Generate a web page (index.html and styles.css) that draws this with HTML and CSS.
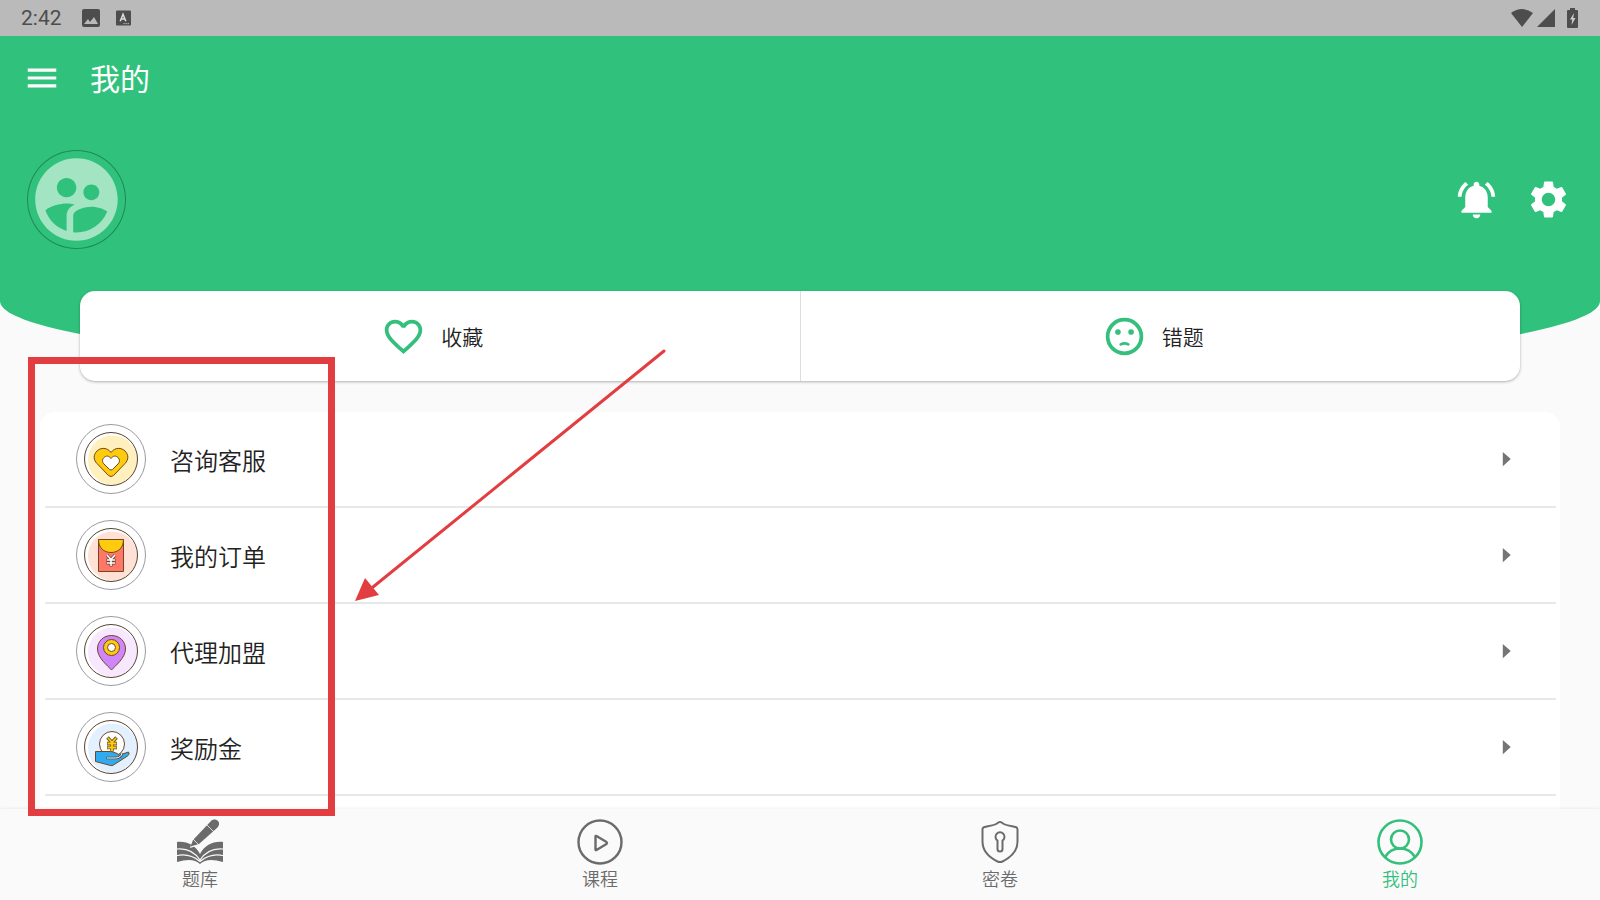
FILE: index.html
```html
<!DOCTYPE html>
<html lang="zh-CN">
<head>
<meta charset="utf-8">
<meta name="viewport" content="width=device-width, initial-scale=1">
<title>我的</title>
<link rel="stylesheet" href="styles.css">
</head>
<body>
<div class="status">
  <span class="time">2:42</span>
  <svg class="status-picture" width="18" height="18" viewBox="0 0 18 18"><rect width="18" height="18" rx="2" fill="#4d4d4d"/><path d="M2 15l4-5 2 3 4-5 4 7z" fill="#bababa"/></svg>
  <svg width="15" height="16" viewBox="0 0 16 16"><rect width="16" height="16" rx="1" fill="#4d4d4d"/><path d="M4.500 11.500L7.500 4l3 7.500M5.500 9h4" fill="none" stroke="#ddd" stroke-width="1.600"/><path d="M8 14h6" stroke="#ddd" stroke-dasharray="1.200 1"/></svg>
  <span class="spacer"></span>
  <svg width="22" height="18" viewBox="0 0 22 18"><path d="M0 4Q11-4 22 4L11 18z" fill="#4d4d4d"/></svg>
  <svg class="status-signal" width="18" height="18" viewBox="0 0 18 18"><path d="M18 0v18H0z" fill="#4d4d4d"/></svg>
  <svg class="status-battery" width="11" height="20" viewBox="0 0 11 20"><path d="M3 0h5v2h2q1 0 1 1v16q0 1-1 1H1q-1 0-1-1V3q0-1 1-1h2z" fill="#4d4d4d"/><path d="M7 5L3 11.500h2.200L4.500 17 8.500 10H6.200z" fill="#ccc"/></svg>
</div>
<header class="hero">
  <div class="appbar">
    <button class="icon-button" aria-label="菜单"><svg width="38" height="38" viewBox="0 0 24 24"><path fill="currentColor" d="M3 18h18v-2H3v2zm0-5h18v-2H3v2zm0-7v2h18V6H3z"/></svg></button>
    <h1>我的</h1>
  </div>
  <div class="profile">
    <button class="avatar" aria-label="头像"><svg width="99" height="99" viewBox="0 0 24 24"><path fill="#a3e4c2" d="M11.990 2c-5.520 0-10 4.480-10 10s4.480 10 10 10 10-4.480 10-10-4.480-10-10-10zm3.610 6.340c1.070 0 1.930.86 1.930 1.930 0 1.070-.86 1.930-1.930 1.930-1.070 0-1.930-.86-1.930-1.930-.01-1.070.86-1.930 1.930-1.930zm-6-1.580c1.300 0 2.360 1.060 2.360 2.360 0 1.300-1.060 2.360-2.360 2.360s-2.360-1.060-2.360-2.360c0-1.310 1.050-2.360 2.360-2.360zm0 9.130v3.750c-2.400-.75-4.300-2.600-5.140-4.960 1.050-1.120 3.670-1.690 5.140-1.690.53 0 1.200.08 1.900.22-1.640.87-1.900 2.020-1.900 2.680zM11.990 20c-.27 0-.53-.01-.79-.04v-4.070c0-1.420 2.940-2.130 4.400-2.130 1.070 0 2.920.39 3.840 1.150-1.170 2.970-4.060 5.090-7.450 5.090z"/></svg></button>
    <span class="spacer"></span>
    <button class="icon-button" aria-label="通知"><svg width="45" height="45" viewBox="0 0 24 24"><path fill="currentColor" d="M7.580 4.080L6.150 2.650C3.750 4.480 2.170 7.300 2.030 10.500h2c.15-2.650 1.510-4.970 3.550-6.420zm12.390 6.420h2c-.15-3.200-1.730-6.020-4.120-7.850l-1.420 1.430c2.020 1.450 3.390 3.770 3.540 6.420zM18 11c0-3.070-1.640-5.640-4.500-6.320V4c0-.83-.67-1.500-1.500-1.500s-1.500.67-1.500 1.500v.68C7.630 5.360 6 7.920 6 11v5l-2 2v1h16v-1l-2-2v-5zm-6 11c.14 0 .27-.01.4-.04.65-.14 1.180-.58 1.440-1.180.1-.24.15-.5.15-.78h-4c.01 1.100.9 2 2.010 2z"/></svg></button>
    <button class="icon-button" aria-label="设置"><svg width="45" height="45" viewBox="0 0 24 24"><path fill="currentColor" d="M19.140 12.940c.04-.3.06-.61.06-.94 0-.32-.02-.64-.07-.94l2.030-1.580c.18-.14.23-.41.12-.61l-1.920-3.320c-.12-.22-.37-.29-.59-.22l-2.390.96c-.5-.38-1.030-.7-1.620-.94l-.36-2.540c-.04-.24-.24-.41-.48-.41h-3.840c-.24 0-.43.17-.47.41l-.36 2.540c-.59.24-1.130.57-1.620.94l-2.390-.96c-.22-.08-.47 0-.59.22L2.740 8.870c-.12.21-.08.47.12.61l2.030 1.580c-.05.3-.09.63-.09.94s.02.64.07.94l-2.030 1.580c-.18.14-.23.41-.12.61l1.920 3.320c.12.22.37.29.59.22l2.390-.96c.5.38 1.030.7 1.620.94l.36 2.540c.05.24.24.41.48.41h3.840c.24 0 .44-.17.47-.41l.36-2.540c.59-.24 1.130-.56 1.620-.94l2.390.96c.22.08.47 0 .59-.22l1.920-3.320c.12-.22.07-.47-.12-.61l-2.010-1.580zM12 15.600c-1.980 0-3.600-1.620-3.600-3.600s1.620-3.600 3.600-3.600 3.600 1.620 3.600 3.600-1.620 3.600-3.600 3.600z"/></svg></button>
  </div>
</header>
<main class="content">
  <div class="shortcuts">
    <button class="shortcut"><svg width="45" height="45" viewBox="0 0 24 24"><path fill="#34bf7c" d="M16.500 3c-1.740 0-3.410.81-4.500 2.090C10.910 3.810 9.240 3 7.500 3 4.420 3 2 5.420 2 8.500c0 3.780 3.400 6.860 8.550 11.540L12 21.350l1.450-1.320C18.600 15.360 22 12.280 22 8.500 22 5.420 19.580 3 16.500 3zm-4.400 15.550l-.1.1-.1-.1C7.140 14.240 4 11.390 4 8.500 4 6.500 5.500 5 7.500 5c1.540 0 3.040.99 3.570 2.360h1.870C13.460 5.990 14.960 5 16.500 5c2 0 3.500 1.500 3.500 3.500 0 2.890-3.140 5.740-7.900 10.050z"/></svg><span>收藏</span></button>
    <button class="shortcut"><svg width="45" height="45" viewBox="0 0 24 24"><circle cx="12" cy="12" r="9" fill="none" stroke="#34bf7c" stroke-width="2"/><circle cx="8.500" cy="9.600" r="1.500" fill="#34bf7c"/><circle cx="15.500" cy="9.600" r="1.500" fill="#34bf7c"/><path d="M10 16.200q2-1.100 4 0" fill="none" stroke="#34bf7c" stroke-width="1.500" stroke-linecap="round"/></svg><span>错题</span></button>
  </div>
  <div class="list">
    <button class="row">
      <svg class="badge" width="70" height="70" viewBox="0 0 70 70"><circle class="ring" cx="35" cy="35" r="34.500"/><circle cx="36.500" cy="36" r="24.500" fill="#fff0bd"/><circle class="rim" cx="35" cy="35" r="26.500"/><path class="ink" fill="#ffcb0d" d="M35 28.500C31 23 24.500 23.500 21 27c-4 4-3.500 9 0 12.500L32.500 51.500q2.500 2 5 0L49 39.500c3.500-3.500 4-8.500 0-12.500-3.500-3.500-10-4-14 1.500z"/><path class="ink" fill="#fff" d="M35 34.500c-2-3-5-3-7-1s-2 4.500 0 6.500l5.500 5.500q1.500 1 3 0L42 40c2-2 2-4.500 0-6.500s-5-2-7 1z"/></svg>
      <span>咨询客服</span>
      <svg class="arrow" width="38" height="38" viewBox="0 0 24 24"><path d="M10 7.500l5 4.500-5 4.500z"/></svg>
    </button>
    <button class="row">
      <svg class="badge" width="70" height="70" viewBox="0 0 70 70"><circle class="ring" cx="35" cy="35" r="34.500"/><circle cx="36.500" cy="36" r="24.500" fill="#ffe2d5"/><circle class="rim" cx="35" cy="35" r="26.500"/><path class="ink" fill="#ff7867" d="M22.500 19.500h25v32h-25z"/><path class="ink" fill="#ffcb0d" d="M22.500 19.500h25c0 8-5 13-12.500 13s-12.500-5-12.500-13z"/><path d="M31 35l4 4.500 4-4.500M30.500 40h9M30.500 43h9M35 39.500v7" fill="none" stroke="#704335" stroke-width="3"/><path d="M31 35l4 4.500 4-4.500M31 40h8M31 43h8M35 39.500v6.500" fill="none" stroke="#fff" stroke-width="1.600"/></svg>
      <span>我的订单</span>
      <svg class="arrow" width="38" height="38" viewBox="0 0 24 24"><path d="M10 7.500l5 4.500-5 4.500z"/></svg>
    </button>
    <button class="row">
      <svg class="badge" width="70" height="70" viewBox="0 0 70 70"><circle class="ring" cx="35" cy="35" r="34.500"/><circle cx="36.500" cy="36" r="24.500" fill="#f7e8ff"/><circle class="rim" cx="35" cy="35" r="26.500"/><path class="ink" fill="#cf86fb" d="M35.500 54C32 50 21.500 42 21.500 33c0-8 6-13.500 14-13.500s14 5.500 14 13.500c0 9-10.500 17-14 21z"/><circle class="ink" cx="35.500" cy="31.500" r="8" fill="#ffcb0d"/><circle class="ink" cx="35.500" cy="31.500" r="4" fill="#fff"/></svg>
      <span>代理加盟</span>
      <svg class="arrow" width="38" height="38" viewBox="0 0 24 24"><path d="M10 7.500l5 4.500-5 4.500z"/></svg>
    </button>
    <button class="row">
      <svg class="badge" width="70" height="70" viewBox="0 0 70 70"><circle class="ring" cx="35" cy="35" r="34.500"/><circle cx="36.500" cy="36" r="24.500" fill="#e3f0ff"/><circle class="rim" cx="35" cy="35" r="26.500"/><circle class="ink" cx="36" cy="32" r="12.500" fill="#fff"/><path d="M31.500 25.500l4.500 5 4.500-5M31 31.500h10M31 35.500h10M36 30.500v9" fill="none" stroke="#6b5021" stroke-width="3.400"/><path d="M32 26l4 4.500 4-4.500M31.500 31.500h9M31.500 35.500h9M36 30.500v8.500" fill="none" stroke="#ffcb0d" stroke-width="1.800"/><path class="ink" fill="#2fabf2" d="M19.500 39.500h15c4 .5 7 2 9 3.500l9-3c1 1.500.5 3-1 4L37.500 53q-1.500 1-3 .5l-15-4z"/><path d="M30.500 46h9c4 0 6-2 6.500-5" fill="none" stroke="#53483b" stroke-width="2.400"/><path d="M31 46h8.500c4 0 6-2 6.500-5" fill="none" stroke="#fff"/></svg>
      <span>奖励金</span>
      <svg class="arrow" width="38" height="38" viewBox="0 0 24 24"><path d="M10 7.500l5 4.500-5 4.500z"/></svg>
    </button>
  </div>
</main>
<nav class="tabs">
  <a class="tab" href="#questions"><svg width="46" height="46" viewBox="0 0 46 46"><path d="M0 23c10-1 18 3 23 12 5-9 13-13 23-12v20c-10-3-18-3-23 2-5-5-13-5-23-2z" fill="#6b6b6b"/><path d="M0 30c10-1 17 2 23 11 6-9 13-12 23-11M0 36.500c10-2 17 1 23 6 6-5 13-8 23-6" fill="none" stroke="#fafafa" stroke-width="1.200"/><path d="M13 29l3-10L31 2c3-3 7-1 9 1 3 3 2 6 0 8L23 26z" fill="#fafafa"/><path d="M13.500 27.500l2.500-6.500L34 2c2-2 5-2 7 0s1 5-1 7L22 25z" fill="#6b6b6b"/><path d="M30 6l7 7M16 20l6 6" stroke="#fafafa" stroke-width=".8"/></svg><span>题库</span></a>
  <a class="tab" href="#courses"><svg width="46" height="46" viewBox="0 0 46 46" fill="none" stroke="currentColor" stroke-linejoin="round" stroke-width="2.400"><circle cx="23" cy="23" r="21.500"/><path d="M18.500 17.500v13q0 1 1 .5l10-6q1-1 0-2l-10-6q-1-.5-1 .5z"/></svg><span>课程</span></a>
  <a class="tab" href="#papers"><svg width="46" height="46" viewBox="0 0 46 46" fill="none" stroke="currentColor" stroke-linejoin="round" stroke-width="2"><path d="M23 3q1.500 0 3 1.500c3 2 8 2.500 12.500 3.500q2 .5 2 2.500v12c0 10-7 16-15 20q-2.500 1-5 0c-8-4-15-10-15-20v-12q0-2 2-2.500C12 7 17 6.500 20 4.500Q21.500 3 23 3z"/><path d="M20.500 21.500a4.500 4.500 0 1 1 5 0V30a2.500 2.500 0 0 1-5 0z"/></svg><span>密卷</span></a>
  <a class="tab active" href="#mine"><svg width="46" height="46" viewBox="0 0 46 46" fill="none" stroke="currentColor" stroke-width="2.600"><circle cx="23" cy="23" r="21.500"/><circle cx="23" cy="20.500" r="9"/><path d="M8 38c3-5 8-8.500 15-8.500S35 33 38 38"/></svg><span>我的</span></a>
</nav>
<div class="highlight"></div>
<svg class="pointer" width="312" height="254" viewBox="0 0 312 254"><path d="M309 2L18 238" stroke="#e23d40" stroke-width="3" stroke-linecap="round"/><path d="M0 252l10-23 14 17z" fill="#e23d40"/></svg>
</body>
</html>
```

FILE: styles.css
```css
* { box-sizing: border-box; }

body {
  margin: 0;
  height: 100vh;
  display: flex;
  flex-direction: column;
  position: relative;
  overflow: hidden;
  background: #fafafa;
  color: #222;
  font-family: "Noto Sans CJK SC", sans-serif;
  font-weight: 350;
}

button {
  padding: 0;
  border: 0;
  background: none;
  color: inherit;
  font: inherit;
  cursor: pointer;
}

svg { display: block; flex: none; }

.spacer { flex: 1; }

.status {
  flex: none;
  display: flex;
  align-items: center;
  height: 36px;
  padding: 0 22px 0 21px;
  background: #bababa;
  color: #4d4d4d;
  font-family: Roboto, sans-serif;
  font-size: 21px;
  font-weight: 400;
}

.time { margin-right: 20px; }
.status-picture { margin-right: 16px; }
.status-signal { margin: 0 12px 0 4px; }

.hero {
  flex: none;
  padding-bottom: 128px;
  margin-bottom: -86px;
  border-radius: 0 0 50% 50% / 0 0 76px 76px;
  background: #30c27c;
  color: #fff;
}

.appbar {
  display: flex;
  align-items: center;
  gap: 29px;
  height: 84px;
  padding: 0 23px;
}

h1 {
  margin: 0;
  padding-bottom: 2px;
  font-size: 30px;
  line-height: 36px;
  font-weight: 400;
}

.profile {
  display: flex;
  align-items: center;
  gap: 27px;
  padding: 30px 29px 0 27px;
}

.avatar {
  border-radius: 50%;
  box-shadow: inset 0 0 0 1px #1f8a55;
}

.content {
  flex: 1;
  min-height: 0;
  display: flex;
  flex-direction: column;
  gap: 31px;
}

.shortcuts {
  flex: none;
  display: flex;
  margin: 0 80px;
  height: 90px;
  border-radius: 15px;
  background: #fff;
  box-shadow: 0 1px 3px rgba(0, 0, 0, 0.3);
  z-index: 1;
}

.shortcut {
  flex: 1;
  display: flex;
  align-items: center;
  justify-content: center;
  gap: 15px;
  padding-right: 15px;
  font-size: 21px;
}

.shortcut:first-child { border-right: 1px solid #ddd; }

.list {
  flex: 1;
  min-height: 0;
  overflow: hidden;
  margin: 0 40px;
  padding: 0 4px 0 5px;
  border-radius: 15px 15px 0 0;
  background: #fff;
}

.row {
  display: flex;
  align-items: center;
  gap: 24px;
  width: 100%;
  height: 96px;
  padding: 0 31px;
  border-bottom: 2px solid #e8e8e8;
  font-size: 24px;
  text-align: left;
}

.row span { flex: 1; }

.ring { fill: #fff; stroke: #9a9aa4; stroke-width: 1; }
.rim { fill: none; stroke: #55432f; stroke-width: 1; }
.ink { stroke: #70471f; stroke-width: 1; }
.arrow { fill: #757575; }

.tabs {
  flex: none;
  display: flex;
  height: 91px;
  padding-top: 10px;
  background: #fafafa;
  box-shadow: 0 -1px 3px rgba(0, 0, 0, 0.06);
  z-index: 1;
}

.tab {
  flex: 1;
  display: flex;
  flex-direction: column;
  align-items: center;
  color: #6b6b6b;
  font-size: 18px;
  line-height: 26px;
  text-decoration: none;
}

.tab.active { color: #34bf7c; }

.highlight {
  position: absolute;
  left: 28px;
  top: 357px;
  width: 307px;
  height: 459px;
  border: 7px solid #e23d40;
  pointer-events: none;
  z-index: 2;
}

.pointer {
  position: absolute;
  left: 355px;
  top: 349px;
  pointer-events: none;
  z-index: 2;
}
```
